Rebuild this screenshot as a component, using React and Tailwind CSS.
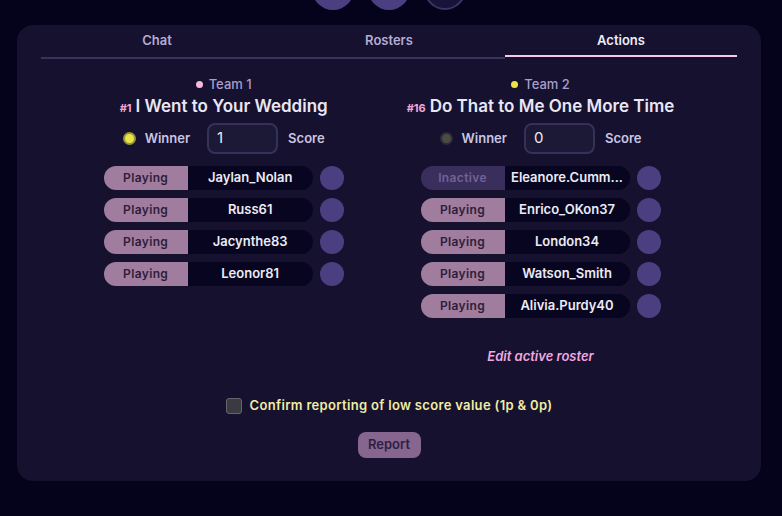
import React from "react";

const font = { fontFamily: "Inter, 'Noto Sans', sans-serif" };

function Row({ status, name }) {
  const inactive = status === "Inactive";
  return (
    <div className="flex items-center gap-[7px]">
      <div className="flex h-[24px] w-[209px] rounded-full overflow-hidden">
        <div
          className={
            "w-[84px] flex items-center justify-center text-[12px] font-semibold tracking-[0.03em] " +
            (inactive ? "bg-[#3a2f5c] text-[#6f6394]" : "bg-[#a07c9f] text-[#2e1d38]")
          }
        >
          {status}
        </div>
        <div className="flex-1 bg-[#07051f] flex items-center justify-center text-[13px] font-semibold text-[#ecebf5] px-2 whitespace-nowrap overflow-hidden">
          {name}
        </div>
      </div>
      <div className="w-[24px] h-[24px] rounded-full bg-[#4b3f82]" />
    </div>
  );
}

function Team({ dot, label, seed, title, winner, score, rows, children }) {
  return (
    <div className="flex flex-col items-center">
      <div className="flex items-center gap-[6px] leading-[16px] text-[13px] font-medium text-[#a79fc9]">
        <span className={"w-[7px] h-[7px] rounded-full " + dot} />
        <span>{label}</span>
      </div>
      <div className="mt-[3px] flex items-baseline gap-[4px] leading-[22px] whitespace-nowrap">
        <span className="text-[11px] font-bold text-[#f2a6d6]">{seed}</span>
        <span className="text-[17px] font-semibold text-[#e9e6f5]">{title}</span>
      </div>
      <div className="mt-[4px] flex items-center">
        <span
          className={
            "w-[13px] h-[13px] rounded-full border-2 " +
            (winner ? "bg-[#ece347] border-[#9b9633]" : "bg-[#4d4c44] border-[#2e2c3a]")
          }
        />
        <span className="ml-[9px] text-[13px] font-semibold text-[#cac5e2]">Winner</span>
        <div className="ml-[17px] w-[71px] h-[31px] rounded-lg bg-[#1b1936] border-2 border-[#35325a] flex items-center pl-[8px] text-[15px] text-[#ecebf5]">
          {score}
        </div>
        <span className="ml-[10px] text-[13px] font-semibold text-[#cac5e2]">Score</span>
      </div>
      <div className="mt-[12px] flex flex-col gap-[8px]">
        {rows.map((r) => (
          <Row key={r[1]} status={r[0]} name={r[1]} />
        ))}
      </div>
      {children}
    </div>
  );
}

export default function App() {
  return (
    <div className="min-h-screen w-full bg-[#05031c] overflow-hidden" style={font}>
      <div className="ml-[17px] w-[744px] flex justify-center gap-[14px] -mt-[32px]">
        <div className="w-[42px] h-[42px] rounded-full bg-[#4b3f82]" />
        <div className="w-[42px] h-[42px] rounded-full bg-[#4b3f82]" />
        <div className="w-[42px] h-[42px] rounded-full bg-[#18133a] border-2 border-[#3b3560]" />
      </div>
      <div className="mt-[15px] ml-[17px] w-[744px] h-[456px] rounded-2xl bg-[#15112f] px-[24px] flex flex-col">
        <div className="grid grid-cols-3 items-start">
          <div className="pt-[7px] pb-[9px] leading-[16px] text-center text-[13px] font-semibold text-[#b3acd4] border-b-2 border-[#38325c]">
            Chat
          </div>
          <div className="pt-[7px] pb-[9px] leading-[16px] text-center text-[13px] font-semibold text-[#b3acd4] border-b-2 border-[#38325c]">
            Rosters
          </div>
          <div className="pt-[7px] pb-[7px] leading-[16px] text-center text-[13px] font-semibold text-[#efedf8] border-b-2 border-[#f6c9ea]">
            Actions
          </div>
        </div>
        <div className="mt-[17px] flex justify-center items-start gap-[63px]">
          <Team
            dot="bg-[#f7b9da]"
            label="Team 1"
            seed="#1"
            title="I Went to Your Wedding"
            winner
            score="1"
            rows={[
              ["Playing", "Jaylan_Nolan"],
              ["Playing", "Russ61"],
              ["Playing", "Jacynthe83"],
              ["Playing", "Leonor81"],
            ]}
          />
          <Team
            dot="bg-[#ece347]"
            label="Team 2"
            seed="#16"
            title="Do That to Me One More Time"
            score="0"
            rows={[
              ["Inactive", "Eleanore.Cumm..."],
              ["Playing", "Enrico_OKon37"],
              ["Playing", "London34"],
              ["Playing", "Watson_Smith"],
              ["Playing", "Alivia.Purdy40"],
            ]}
          >
            <div className="mt-[30px] text-[13px] font-semibold italic text-[#f0a8e0] leading-[16px]">
              Edit active roster
            </div>
          </Team>
        </div>
        <div className="mt-[32px] flex justify-center items-center gap-[8px]">
          <span className="w-[16px] h-[16px] rounded-[3px] bg-[#3b3a40] border border-[#66646c]" />
          <span className="text-[13px] font-semibold text-[#f1eda3] tracking-[0.025em]">
            Confirm reporting of low score value (1p &amp; 0p)
          </span>
        </div>
        <div className="mt-[16px] flex justify-center">
          <button className="w-[63px] h-[26px] rounded-lg bg-[#86668f] text-[13px] font-semibold text-[#2f1f3f]">
            Report
          </button>
        </div>
      </div>
    </div>
  );
}
